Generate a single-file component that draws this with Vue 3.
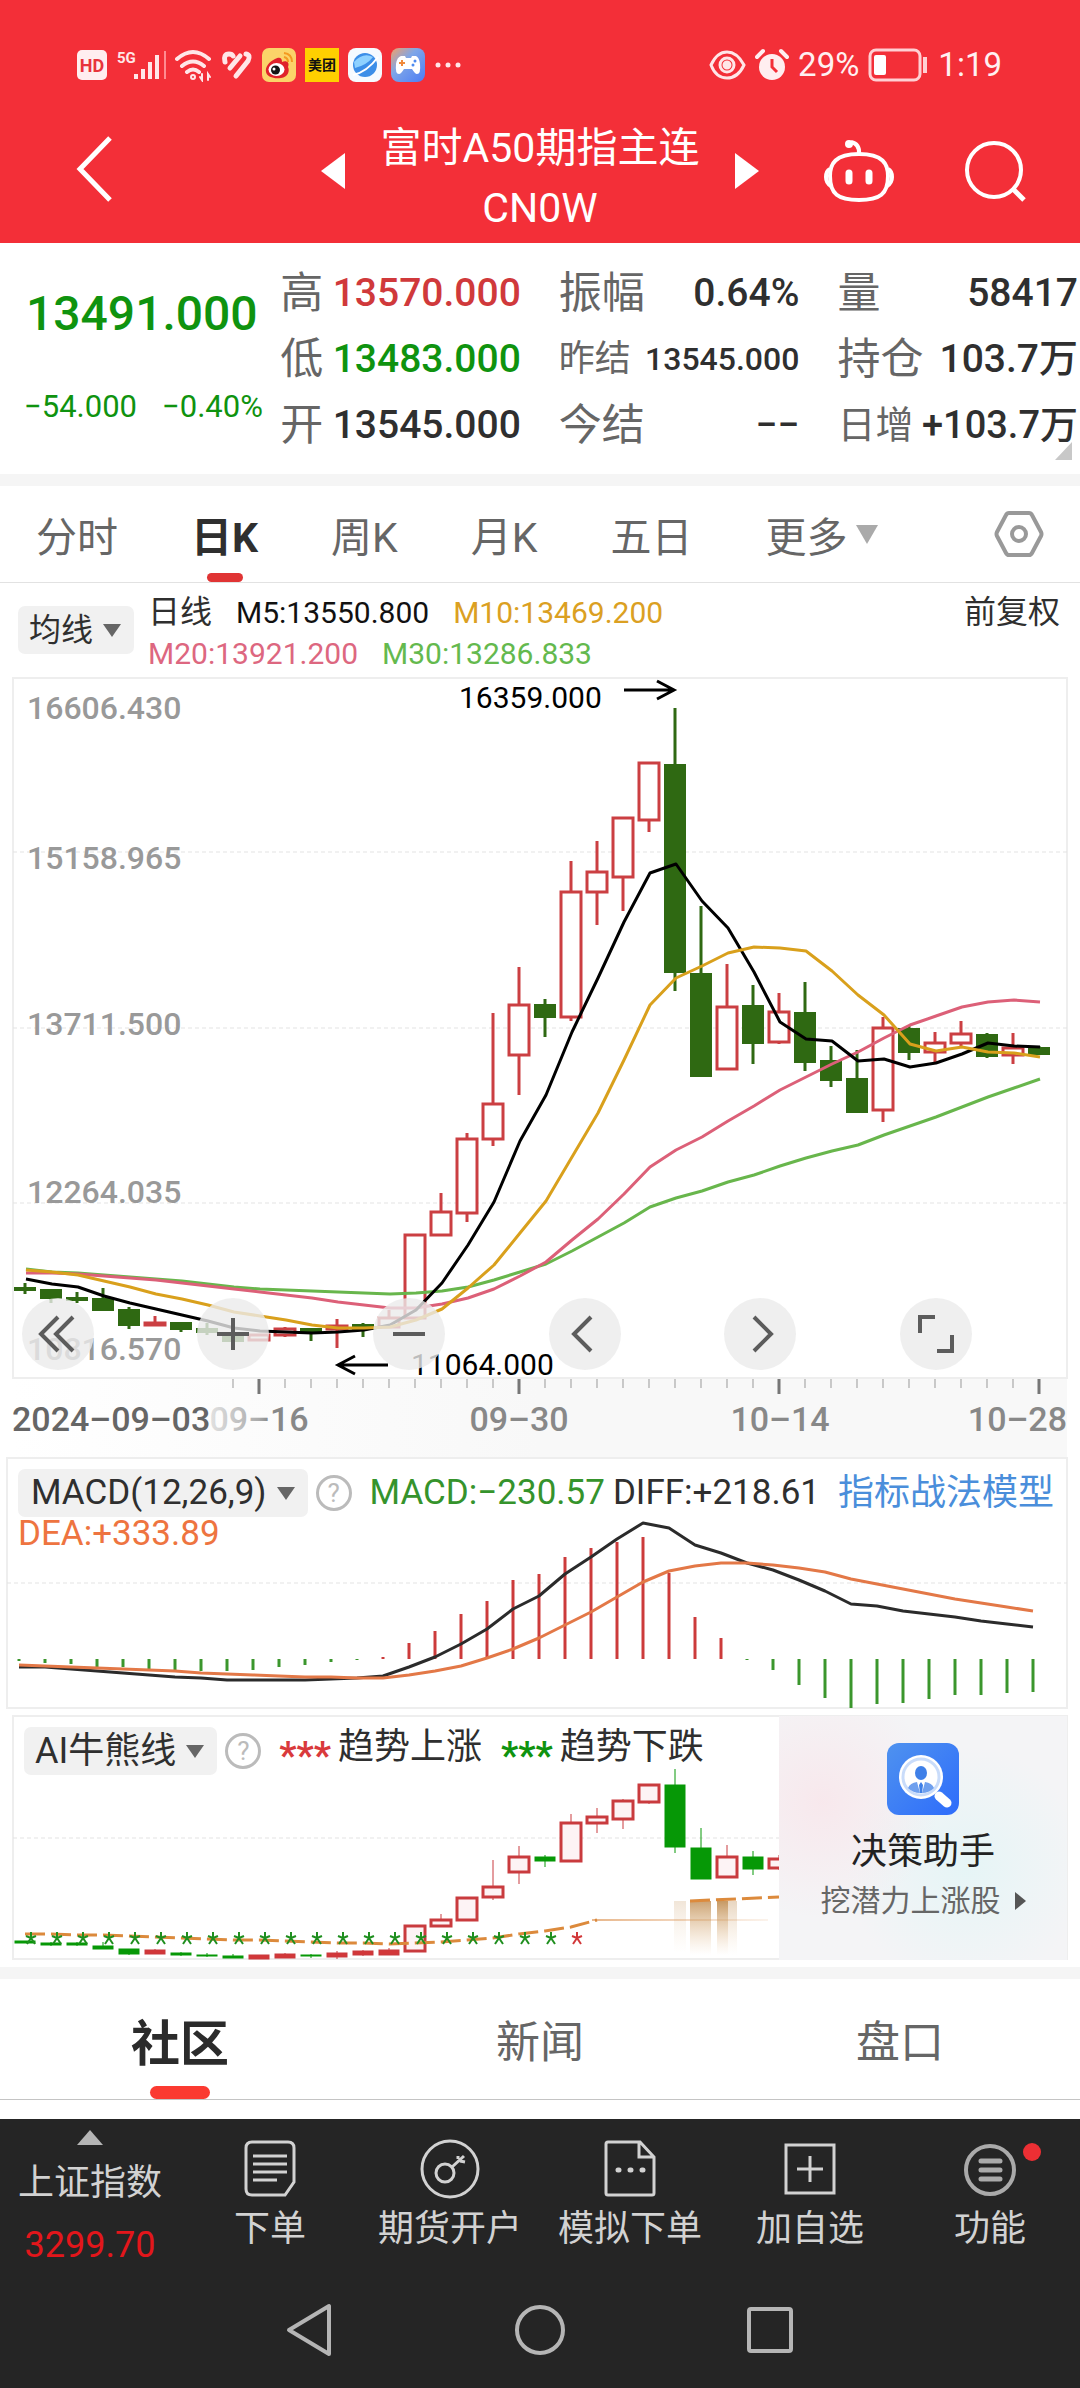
<script setup>
import { ref } from 'vue'

const STEP = 26

const stats = [
  [
    { label: '高', value: '13570.000', tone: 'up' },
    { label: '低', value: '13483.000', tone: 'down' },
    { label: '开', value: '13545.000' }
  ],
  [
    { label: '振幅', value: '0.64%' },
    { label: '昨结', value: '13545.000', size: 'small' },
    { label: '今结', value: '−−' }
  ],
  [
    { label: '量', value: '58417' },
    { label: '持仓', value: '103.7万' },
    { label: '日增', value: '+103.7万', size: 'medium' }
  ]
]

const periods = ['分时', '日K', '周K', '月K', '五日']
const period = ref('日K')

const pages = ['社区', '新闻', '盘口']
const page = ref('社区')

// kind, wick top, body top, body bottom, wick bottom
const candles = [
  ['g', 1283, 1288, 1290, 1294], ['g', 1289, 1290, 1298, 1303], ['g', 1292, 1298, 1300, 1303],
  ['g', 1288, 1299, 1310, 1310], ['g', 1307, 1310, 1325, 1329], ['r', 1316, 1323, 1325, 1325],
  ['g', 1323, 1323, 1329, 1332], ['g', 1323, 1329, 1332, 1335], ['g', 1334, 1334, 1341, 1341],
  ['r', 1334, 1335, 1340, 1341], ['r', 1327, 1329, 1335, 1337], ['g', 1328, 1329, 1332, 1341],
  ['r', 1319, 1326, 1329, 1348], ['g', 1323, 1325, 1329, 1337], ['r', 1310, 1318, 1327, 1327],
  ['r', 1235, 1235, 1318, 1318], ['r', 1193, 1212, 1235, 1235], ['r', 1133, 1139, 1213, 1222],
  ['r', 1013, 1104, 1139, 1146], ['r', 967, 1005, 1055, 1095], ['g', 999, 1005, 1017, 1037],
  ['r', 861, 892, 1017, 1021], ['r', 841, 872, 892, 925], ['r', 817, 818, 877, 911],
  ['r', 762, 763, 820, 832], ['g', 708, 765, 972, 991], ['g', 906, 974, 1076, 1077],
  ['r', 964, 1007, 1069, 1069], ['g', 985, 1006, 1043, 1064], ['r', 993, 1012, 1042, 1044],
  ['g', 982, 1013, 1062, 1071], ['g', 1046, 1061, 1080, 1087], ['g', 1050, 1079, 1112, 1112],
  ['r', 1017, 1028, 1110, 1122], ['g', 1026, 1029, 1052, 1060], ['r', 1032, 1043, 1052, 1062],
  ['r', 1021, 1034, 1043, 1047], ['g', 1033, 1035, 1056, 1058], ['r', 1033, 1048, 1055, 1064],
  ['g', 1046, 1048, 1054, 1055]
].map(([kind, high, top, bottom, low], i) => ({ kind, high, top, bottom, low, x: 25 + STEP * i }))

const points = (start, ys) => ys.map((y, i) => `${start + STEP * i},${y}`).join(' ')

const averages = [
  { name: 'm30', ys: [1269, 1272, 1273, 1275, 1277, 1279, 1281, 1284, 1287, 1289, 1290, 1291, 1292, 1293, 1294, 1293, 1291, 1287, 1280, 1272, 1264, 1251, 1237, 1223, 1207, 1198, 1191, 1182, 1175, 1166, 1158, 1151, 1145, 1135, 1126, 1117, 1107, 1097, 1088, 1079] },
  { name: 'm20', ys: [1273, 1273, 1274, 1276, 1278, 1280, 1283, 1286, 1289, 1292, 1295, 1298, 1302, 1305, 1308, 1308, 1304, 1298, 1289, 1276, 1262, 1240, 1219, 1194, 1167, 1150, 1137, 1121, 1106, 1090, 1077, 1064, 1052, 1038, 1025, 1016, 1007, 1002, 1000, 1002] },
  { name: 'm5', ys: [1279, 1284, 1287, 1296, 1303, 1309, 1315, 1321, 1328, 1331, 1332, 1333, 1332, 1330, 1325, 1310, 1283, 1245, 1202, 1141, 1095, 1032, 978, 922, 873, 864, 901, 928, 972, 1022, 1039, 1041, 1061, 1059, 1067, 1063, 1054, 1043, 1046, 1047] },
  { name: 'm10', ys: [1270, 1272, 1275, 1281, 1287, 1294, 1299, 1305, 1312, 1316, 1320, 1325, 1328, 1328, 1327, 1320, 1309, 1288, 1265, 1233, 1201, 1157, 1113, 1060, 1005, 978, 966, 953, 947, 948, 951, 971, 995, 1015, 1044, 1051, 1047, 1052, 1053, 1057] }
].map(({ name, ys }) => ({ name, points: points(26, ys) }))

const levels = [
  { text: '16606.430', y: 719 },
  { text: '15158.965', y: 869 },
  { text: '13711.500', y: 1035 },
  { text: '12264.035', y: 1203 },
  { text: '10816.570', y: 1360 }
]

const ticks = Array.from({ length: 32 }, (_, i) => ({ x: 233 + STEP * i, major: i % 10 === 1 }))

const macdBase = 1659
const macdBars = [
  1661, 1663, 1664, 1667, 1667, 1669, 1670, 1671, 1671, 1670, 1667, 1665, 1662, 1660, 1657, 1643, 1631, 1614, 1601, 1580,
  1574, 1557, 1548, 1542, 1537, 1573, 1617, 1638, 1660, 1670, 1685, 1698, 1708, 1704, 1703, 1699, 1695, 1695, 1693, 1692
].map((y, i) => ({ y, x: 19 + STEP * i }))
const diff = points(19, [
  1667, 1667, 1669, 1671, 1673, 1675, 1677, 1678, 1680, 1680, 1680, 1680, 1679, 1678, 1676, 1667, 1657, 1644, 1629, 1609,
  1596, 1574, 1557, 1539, 1523, 1528, 1545, 1553, 1563, 1570, 1580, 1591, 1604, 1606, 1611, 1614, 1617, 1621, 1624, 1627
])
const dea = points(19, [
  1665, 1666, 1667, 1668, 1669, 1670, 1671, 1673, 1674, 1675, 1676, 1677, 1677, 1678, 1678, 1675, 1671, 1666, 1658, 1649,
  1638, 1625, 1612, 1597, 1582, 1571, 1566, 1563, 1563, 1565, 1568, 1572, 1579, 1584, 1589, 1594, 1599, 1603, 1607, 1611
])

const trendCandles = [
  ['g', 1941, 1941, 1943, 1943], ['g', 1942, 1943, 1945, 1946], ['g', 1942, 1943, 1945, 1946],
  ['g', 1942, 1946, 1949, 1949], ['g', 1949, 1949, 1954, 1955], ['f', 1949, 1950, 1954, 1954],
  ['g', 1952, 1953, 1955, 1956], ['g', 1953, 1955, 1956, 1957], ['g', 1954, 1956, 1958, 1958],
  ['f', 1955, 1955, 1959, 1959], ['f', 1953, 1954, 1958, 1958], ['g', 1954, 1955, 1956, 1958],
  ['f', 1951, 1953, 1957, 1959], ['f', 1950, 1951, 1955, 1956], ['f', 1948, 1950, 1955, 1955],
  ['r', 1926, 1926, 1951, 1951], ['r', 1914, 1920, 1926, 1926], ['r', 1897, 1898, 1920, 1921],
  ['r', 1860, 1887, 1897, 1900], ['r', 1846, 1857, 1872, 1884], ['g', 1855, 1857, 1861, 1867],
  ['r', 1814, 1823, 1861, 1862], ['r', 1808, 1817, 1823, 1833], ['r', 1799, 1801, 1819, 1829],
  ['r', 1784, 1785, 1802, 1804], ['g', 1769, 1785, 1847, 1853], ['g', 1828, 1848, 1879, 1879],
  ['r', 1845, 1857, 1877, 1878], ['g', 1851, 1857, 1869, 1875], ['r', 1855, 1859, 1868, 1870]
].map(([kind, high, top, bottom, low], i) => ({ kind, high, top, bottom, low, x: 25 + STEP * i }))
const trendLine = points(25, [
  1934, 1934, 1935, 1935, 1936, 1937, 1938, 1939, 1940, 1940, 1941, 1942, 1943, 1943, 1944, 1943, 1942, 1940, 1938, 1934, 1931, 1927, 1920
])
const stars = Array.from({ length: 22 }, (_, i) => ({ x: 31 + STEP * i, up: i === 21 }))
</script>

<template>
  <div class="app">
    <header class="top">
      <div class="status">
        <div class="status-group">
          <svg width="30" height="34" viewBox="0 0 30 34">
            <rect y="2" width="30" height="30" rx="5" fill="#ffeef0" />
            <text x="15" y="24" text-anchor="middle" class="hd">HD</text>
          </svg>
          <svg width="50" height="34" viewBox="0 0 50 34">
            <text x="1" y="15" class="fiveg">5G</text>
            <path d="M20 31v-5M27 31V21M34 31V14M41 31V7" stroke="#ffe6e8" stroke-width="4" />
            <path d="M49 31V3" stroke="#ff8a90" stroke-width="2" />
          </svg>
          <svg width="37" height="34" viewBox="0 0 37 34" fill="none" stroke="#ffe6e8" stroke-width="4" stroke-linecap="round">
            <path d="M2 11q16-14 32 0M7 18q11-9 22 0M12 24q6-5 12 0" />
            <circle cx="18" cy="29" r="1" />
            <path d="M27 26v6l-2-3M33 32v-6l2 3" stroke-width="2" />
          </svg>
          <svg width="32" height="34" viewBox="0 0 32 34" fill="none" stroke="#ffe6e8" stroke-width="5" stroke-linecap="round">
            <path d="M4 14q-2-8 4-8 3 0 4 2M9 20L19 8M15 28L27 13q3-6-2-7" />
          </svg>
          <svg width="34" height="34" viewBox="0 0 34 34">
            <rect width="34" height="34" rx="7" fill="#fbd469" />
            <path d="M13 11c-6 3-10 8-9 13s8 7 15 6 9-7 7-11c2-5-2-7-6-5 0-5-3-5-7-3z" fill="#e0222b" />
            <ellipse cx="14.500" cy="21.500" rx="8" ry="6.500" fill="#fff" />
            <circle cx="13.500" cy="22" r="4.500" fill="#151515" />
            <circle cx="12" cy="21" r="1.500" fill="#fff" />
            <path d="M22 5q8 1 8 9M22 9q4 1 4 5" fill="none" stroke="#f49a20" stroke-width="2" />
          </svg>
          <span class="meituan">美团</span>
          <svg width="34" height="34" viewBox="0 0 34 34">
            <rect width="34" height="34" rx="8" fill="#f5faff" />
            <circle cx="17" cy="17" r="12" fill="#3c8ee8" />
            <path d="M6 14q9-10 19-5-6 8-18 11z" fill="#8ed1ff" />
            <path d="M5 27Q19 24 30 9" fill="none" stroke="#fff" stroke-width="2" />
          </svg>
          <svg width="34" height="34" viewBox="0 0 34 34">
            <defs>
              <linearGradient id="game" x1="0" y1="0" x2="1" y2="1">
                <stop offset="0" stop-color="#f3a06a" />
                <stop offset="0.400" stop-color="#7ea6e8" />
                <stop offset="1" stop-color="#4c7cf5" />
              </linearGradient>
            </defs>
            <rect width="34" height="34" rx="8" fill="url(#game)" />
            <path d="M10 8h4l1 2h5l1-2h4q3 1 4 8 1 10-3 10-2 0-5-5h-8q-3 5-5 5-4 0-3-10 1-7 5-8z" fill="#fff" />
            <path d="M11 12v6M8 15h6" stroke="#f08a3c" stroke-width="2" />
            <circle cx="24" cy="13" r="1.500" fill="#4c8af0" />
            <circle cx="22" cy="17" r="1.500" fill="#4c8af0" />
          </svg>
          <svg width="30" height="34" viewBox="0 0 30 34" fill="#ffe6e8">
            <circle cx="4" cy="17" r="2.500" /><circle cx="14" cy="17" r="2.500" /><circle cx="24" cy="17" r="2.500" />
          </svg>
        </div>
        <div class="status-group">
          <svg width="37" height="34" viewBox="0 0 37 34" fill="none" stroke="#ffe6e8" stroke-width="3">
            <path d="M2 17Q8 4 18 4t17 13Q29 30 18 30T2 17z" />
            <circle cx="18" cy="17" r="7" />
            <circle cx="18" cy="17" r="3" fill="#ffe6e8" />
          </svg>
          <svg width="34" height="34" viewBox="0 0 34 34">
            <circle cx="17" cy="19" r="13" fill="#ffeef0" />
            <path d="M17 11v8l5 5" fill="none" stroke="#f32f38" stroke-width="3" />
            <path d="M2 9l6-6M32 9l-6-6" stroke="#ffeef0" stroke-width="4" stroke-linecap="round" />
          </svg>
          <span>29%</span>
          <svg width="61" height="34" viewBox="0 0 61 34">
            <rect x="2" y="2" width="50" height="30" rx="6" fill="none" stroke="#ffd0d3" stroke-width="3" />
            <rect x="6" y="7" width="12" height="20" rx="2" fill="#fff" />
            <path d="M57 9v16" stroke="#ffd0d3" stroke-width="4" />
          </svg>
          <span>1:19</span>
        </div>
      </div>
      <div class="title-row">
        <div class="title-left">
          <button type="button" class="bare" aria-label="返回">
            <svg width="38" height="68" viewBox="0 0 38 68" fill="none" stroke="#fff" stroke-width="5"><path d="M34 3L4 34l30 31" /></svg>
          </button>
        </div>
        <div class="title-mid">
          <button type="button" class="bare" aria-label="上一个">
            <svg width="24" height="36" viewBox="0 0 24 36"><path d="M24 0v36L0 18z" fill="#fff" /></svg>
          </button>
          <h1>富时A50期指主连<br />CN0W</h1>
          <button type="button" class="bare" aria-label="下一个">
            <svg width="24" height="36" viewBox="0 0 24 36"><path d="M0 0v36l24-18z" fill="#fff" /></svg>
          </button>
        </div>
        <div class="title-right">
          <button type="button" class="bare" aria-label="助手">
            <svg width="72" height="66" viewBox="0 0 72 66" fill="none" stroke="#fff" stroke-width="4">
              <path d="M36 16c24 0 29 10 29 22 0 18-8 24-29 24S7 56 7 38c0-12 5-22 29-22z" />
              <path d="M7 31q-4 2-4 8t5 9M65 31q4 2 4 8t-5 9M36 16q1-10-8-12" />
              <circle cx="26" cy="6" r="3" fill="#fff" stroke-width="2" />
              <path d="M26 35v8M46 35v8" stroke-width="7" stroke-linecap="round" />
            </svg>
          </button>
          <button type="button" class="bare" aria-label="搜索">
            <svg width="64" height="64" viewBox="0 0 64 64" fill="none" stroke="#fff" stroke-width="4">
              <circle cx="31" cy="31" r="27" /><path d="M50 50l11 11" stroke-width="5" />
            </svg>
          </button>
        </div>
      </div>
    </header>

    <section class="quote">
      <div class="price">
        <strong>13491.000</strong>
        <div class="change"><span>−54.000</span><span>−0.40%</span></div>
      </div>
      <div class="stats">
        <dl v-for="(column, c) in stats" :key="c">
          <div v-for="item in column" :key="item.label" :class="['stat', item.tone, item.size]">
            <dt>{{ item.label }}</dt>
            <dd>{{ item.value }}</dd>
          </div>
        </dl>
      </div>
      <i class="corner"></i>
    </section>

    <nav class="periods">
      <button v-for="name in periods" :key="name" type="button" :class="{ active: name === period }" @click="period = name">{{ name }}</button>
      <button type="button" class="more">更多<i class="caret large"></i></button>
      <button type="button" class="gear" aria-label="设置">
        <svg width="50" height="48" viewBox="0 0 50 48" fill="none" stroke="#999" stroke-width="4">
          <path d="M15 3h20q2 0 3 2l9 17q1 2 0 4l-9 17q-1 2-3 2H15q-2 0-3-2L3 26q-1-2 0-4l9-17q1-2 3-2z" />
          <circle cx="25" cy="24" r="7" />
        </svg>
      </button>
    </nav>

    <div class="legend">
      <button type="button" class="pill">均线<i class="caret"></i></button>
      <div class="legend-values">
        <div><span>日线</span><span class="m5">M5:13550.800</span><span class="m10">M10:13469.200</span></div>
        <div><span class="m20">M20:13921.200</span><span class="m30">M30:13286.833</span></div>
      </div>
      <button type="button" class="adjust">前复权</button>
    </div>

    <section class="kline">
      <svg class="plot" viewBox="0 677 1080 780">
        <defs>
          <linearGradient id="axis" x1="0" x2="1"><stop offset="0" stop-color="#fff" /><stop offset="0.500" stop-color="#f8f8f8" /></linearGradient>
          <linearGradient id="fade" x1="0" x2="1"><stop offset="0" stop-color="#e2e2e2" /><stop offset="0.500" stop-color="#aaa" /><stop offset="0.600" stop-color="#888" /></linearGradient>
        </defs>
        <rect x="13" y="1379" width="1054" height="78" fill="url(#axis)" />
        <rect x="13" y="678" width="1054" height="700" class="frame" />
        <path d="M13 852H1067M13 1028H1067M13 1203H1067" class="grid" />
        <text v-for="level in levels" :key="level.text" x="27" :y="level.y" class="level">{{ level.text }}</text>
        <g v-for="c in candles" :key="c.x" :class="c.kind">
          <path :d="`M${c.x} ${c.high}V${c.top}M${c.x} ${c.bottom}V${c.low}`" />
          <rect :x="c.x - 10" :y="c.top" width="20" :height="c.bottom - c.top" />
        </g>
        <polyline v-for="line in averages" :key="line.name" :points="line.points" :class="['line', line.name]" />
        <text x="459" y="708" class="mark">16359.000</text>
        <path d="M624 690h50M657 681l17 9-17 9" class="arrow" />
        <text x="411" y="1375" class="mark">11064.000</text>
        <path d="M388 1365h-50M355 1356l-17 9 17 9" class="arrow" />
        <path v-for="t in ticks" :key="t.x" :d="`M${t.x} 1379v${t.major ? 15 : 9}`" :class="t.major ? 'tick major' : 'tick'" />
        <text x="12" y="1431" class="date first">2024–09–03</text>
        <text x="259" y="1431" text-anchor="middle" class="date" fill="url(#fade)">09–16</text>
        <text x="519" y="1431" text-anchor="middle" class="date" fill="#888">09–30</text>
        <text x="780" y="1431" text-anchor="middle" class="date" fill="#888">10–14</text>
        <text x="1067" y="1431" text-anchor="end" class="date" fill="#888">10–28</text>
      </svg>
      <div class="tools">
        <button type="button" aria-label="更早"><svg viewBox="0 0 72 72"><path d="M36 19L19 36l17 17M51 19L34 36l17 17" /></svg></button>
        <button type="button" aria-label="放大"><svg viewBox="0 0 72 72"><path d="M36 20v32M20 36h32" /></svg></button>
        <button type="button" aria-label="缩小"><svg viewBox="0 0 72 72"><path d="M20 36h32" /></svg></button>
        <button type="button" aria-label="左移"><svg viewBox="0 0 72 72"><path d="M42 19L25 36l17 17" /></svg></button>
        <button type="button" aria-label="右移"><svg viewBox="0 0 72 72"><path d="M30 19l17 17-17 17" /></svg></button>
        <button type="button" aria-label="全屏"><svg viewBox="0 0 72 72"><path d="M35 19H20v16M37 53h15V37" /></svg></button>
      </div>
    </section>

    <section class="stack">
      <svg class="plot" viewBox="0 1457 1080 253">
        <rect x="7" y="1458" width="1060" height="250" class="frame" />
        <path d="M7 1583H1067" class="grid" />
        <path v-for="b in macdBars" :key="b.x" :d="`M${b.x} ${macdBase}V${b.y}`" :class="b.y > macdBase ? 'bar-down' : 'bar-up'" />
        <polyline :points="diff" class="line diff" />
        <polyline :points="dea" class="line dea" />
      </svg>
      <div class="indicator">
        <div class="indicator-row">
          <button type="button" class="pill wide">MACD(12,26,9)<i class="caret"></i></button>
          <button type="button" class="help" aria-label="MACD 说明">?</button>
          <span class="macd-value">MACD:−230.57</span>
          <span>DIFF:+218.61</span>
          <a href="#model">指标战法模型</a>
        </div>
        <div class="dea-value">DEA:+333.89</div>
      </div>
    </section>

    <section class="stack">
      <svg class="plot" viewBox="0 1710 1080 257">
        <defs>
          <clipPath id="trend"><rect x="13" y="1716" width="766" height="244" /></clipPath>
          <linearGradient id="glow" x1="0" y1="0" x2="0" y2="1"><stop offset="0" stop-color="#b87f3c" stop-opacity="0.800" /><stop offset="1" stop-color="#e8c090" stop-opacity="0" /></linearGradient>
          <linearGradient id="glow-soft" x1="0" x2="1"><stop offset="0" stop-color="#d98840" stop-opacity="0.600" /><stop offset="1" stop-color="#d98840" stop-opacity="0.100" /></linearGradient>
        </defs>
        <rect x="13" y="1716" width="1054" height="243" class="frame" />
        <path d="M13 1838H779" class="grid" />
        <g clip-path="url(#trend)">
          <g v-for="c in trendCandles" :key="c.x" :class="['trend', c.kind]">
            <path :d="`M${c.x} ${c.high}V${c.top}M${c.x} ${c.bottom}V${c.low}`" />
            <rect :x="c.x - 10" :y="c.top" width="20" :height="c.bottom - c.top" />
          </g>
          <polyline :points="trendLine" class="trend-line" />
          <rect x="592" y="1919" width="176" height="2" fill="url(#glow-soft)" />
          <rect x="674" y="1901" width="12" height="52" fill="url(#glow)" opacity="0.250" />
          <rect x="690" y="1901" width="21" height="54" fill="url(#glow)" opacity="0.900" />
          <rect x="717" y="1901" width="11" height="54" fill="url(#glow)" />
          <rect x="728" y="1901" width="9" height="54" fill="url(#glow)" opacity="0.400" />
          <path d="M690 1901L779 1897" class="trend-line" />
        </g>
        <path
          v-for="s in stars"
          :key="s.x"
          :d="`M${s.x} 1938v-6M${s.x} 1938l-5-2M${s.x} 1938l5-2M${s.x} 1938l-4 6M${s.x} 1938l4 6`"
          :class="s.up ? 'star-up' : 'star-down'"
        />
      </svg>
      <div class="indicator trend-head">
        <div class="indicator-row">
          <button type="button" class="pill">AI牛熊线<i class="caret"></i></button>
          <button type="button" class="help" aria-label="AI牛熊线 说明">?</button>
          <span class="key"><b class="up">***</b>趋势上涨</span>
          <span class="key"><b class="down">***</b>趋势下跌</span>
        </div>
      </div>
      <a class="promo" href="#assistant">
        <svg width="72" height="72" viewBox="0 0 72 72">
          <defs>
            <linearGradient id="blue" x1="0" y1="0" x2="1" y2="1"><stop offset="0" stop-color="#4f92ef" /><stop offset="1" stop-color="#2d6cfb" /></linearGradient>
          </defs>
          <rect width="72" height="72" rx="12" fill="url(#blue)" />
          <path d="M52 53l8 7" stroke="#fff" stroke-width="9" stroke-linecap="round" />
          <circle cx="34" cy="34" r="22" fill="#fff" />
          <circle cx="34" cy="34" r="18" fill="#fff" stroke="#c9dcfa" stroke-width="3" />
          <ellipse cx="34" cy="30" rx="6" ry="7" fill="#3f80e8" />
          <path d="M21 45q2-5 9-6l3 11q-7 0-12-5zM47 45q-2-5-9-6l-3 11q7 0 12-5z" fill="#6fa0ee" />
          <path d="M34 39l2 3-1 8h-2l-1-8z" fill="#3f80e8" />
        </svg>
        <strong>决策助手</strong>
        <span>挖潜力上涨股<i></i></span>
      </a>
    </section>

    <nav class="pages">
      <button v-for="name in pages" :key="name" type="button" :class="{ active: name === page }" @click="page = name">{{ name }}</button>
    </nav>

    <footer class="bottom">
      <nav class="actions">
        <a href="#index" class="index"><i></i><span>上证指数</span><b>3299.70</b></a>
        <a href="#order">
          <svg viewBox="0 0 60 60"><path d="M12 3h36q6 0 6 6v34l-9 13H12q-6 0-6-6V9q0-6 6-6zM13 17h34M13 25h34M13 33h34M13 41h24" /></svg>
          <span>下单</span>
        </a>
        <a href="#open">
          <svg viewBox="0 0 60 60"><circle cx="30" cy="30" r="28" /><circle cx="25" cy="34" r="9" /><path d="M32 28l12-11M38 20v-3M40 22l5 1" /></svg>
          <span>期货开户</span>
        </a>
        <a href="#demo">
          <svg viewBox="0 0 60 60"><path d="M6 5q0-2 2-2h32l14 15v36q0 2-2 2H8q-2 0-2-2zM39 3v15h15" /><path d="M18 31h1M30 31h1M42 31h1" stroke-width="5" stroke-linecap="round" /></svg>
          <span>模拟下单</span>
        </a>
        <a href="#add">
          <svg viewBox="0 0 60 60"><path d="M6 6h48v48H6zM30 17v26M17 30h26" /></svg>
          <span>加自选</span>
        </a>
        <a href="#tools" class="dot">
          <svg viewBox="0 0 60 60" class="dim"><circle cx="30" cy="31" r="24" /><path d="M21 22h19M21 31h19M21 40h19" stroke-width="5" stroke-linecap="round" /></svg>
          <span>功能</span>
        </a>
      </nav>
      <div class="system">
        <button type="button" class="bare" aria-label="返回上级"><svg width="54" height="54" viewBox="0 0 54 54"><path d="M46 3v48L6 27z" /></svg></button>
        <button type="button" class="bare" aria-label="主屏幕"><svg width="54" height="54" viewBox="0 0 54 54"><circle cx="27" cy="27" r="23" /></svg></button>
        <button type="button" class="bare" aria-label="最近任务"><svg width="54" height="54" viewBox="0 0 54 54"><rect x="6" y="6" width="42" height="42" rx="2" /></svg></button>
      </div>
    </footer>
  </div>
</template>

<style>
body {
  margin: 0;
  background: #fff;
}
</style>

<style scoped>
.app {
  font-family: Roboto, "Noto Sans CJK SC", sans-serif;
  color: #2f2f2f;
  overflow: hidden;
}
button {
  margin: 0;
  padding: 0;
  border: 0;
  background: none;
  font: inherit;
  color: inherit;
}
a {
  color: inherit;
  text-decoration: none;
}
svg {
  display: block;
}
i {
  display: block;
}

.top {
  background: #f32f38;
  color: #fff;
}
.status {
  display: flex;
  justify-content: space-between;
  padding: 48px 78px 16px 77px;
}
.status-group {
  display: flex;
  align-items: center;
  gap: 9px;
  font-size: 33px;
  line-height: 34px;
  color: #fff0f1;
}
.hd {
  font-size: 18px;
  font-weight: 700;
  fill: #e8343c;
}
.fiveg {
  font-size: 15px;
  font-weight: 700;
  fill: #ffe6e8;
}
.meituan {
  width: 34px;
  background: #ffd000;
  color: #111;
  font-size: 14px;
  font-weight: 700;
  text-align: center;
}
.title-row {
  display: grid;
  grid-template-columns: 1fr 438px 1fr;
  align-items: center;
  height: 145px;
}
.title-left {
  padding-left: 76px;
}
.title-mid {
  display: flex;
  align-items: center;
  justify-content: space-between;
}
.title-right {
  display: flex;
  justify-content: flex-end;
  align-items: center;
  gap: 68px;
  padding-right: 53px;
}
h1 {
  margin: 0;
  padding-top: 14px;
  font-size: 41px;
  font-weight: 400;
  line-height: 60px;
  text-align: center;
}

.quote {
  position: relative;
  display: flex;
  padding: 17px 2px 16px 0;
  border-bottom: 12px solid #f5f5f5;
}
.price {
  flex: 0 0 26%;
  padding-top: 24px;
  color: #0f930f;
}
.price strong {
  display: block;
  padding-left: 26px;
  font-size: 48px;
  font-weight: 500;
  line-height: 60px;
}
.change {
  display: flex;
  gap: 25px;
  padding: 43px 0 0 24px;
  font-size: 31px;
  line-height: 40px;
}
.stats {
  flex: 1;
  display: grid;
  grid-template-columns: repeat(3, 1fr);
  gap: 38px;
}
dl,
dd {
  margin: 0;
}
.stat {
  display: flex;
  justify-content: space-between;
  font-size: 39px;
  line-height: 66px;
  white-space: nowrap;
}
.stat dt {
  font-size: 43px;
  color: #666;
}
.stat dd {
  font-weight: 500;
}
.stat.small dd {
  font-size: 32px;
}
.stat.small dt {
  font-size: 36px;
}
.stat.medium,
.stat.medium dt {
  font-size: 38px;
}
.up {
  color: #d93a3c;
}
.stat.up dd {
  color: #d0393b;
}
.stat.down {
  color: #0f930f;
}
.down {
  color: #0f930f;
}
.corner {
  position: absolute;
  right: 8px;
  bottom: 14px;
  border-left: 17px solid transparent;
  border-bottom: 18px solid #c8c8c8;
}

.periods {
  display: flex;
  gap: 73px;
  height: 96px;
  padding: 0 36px;
  border-bottom: 1px solid #e2e2e2;
  font-size: 41px;
  color: #666;
}
.periods button {
  position: relative;
  white-space: nowrap;
}
.periods .active {
  color: #2f2f2f;
  font-weight: 700;
}
.periods .active::after {
  content: "";
  position: absolute;
  left: 50%;
  bottom: 0;
  width: 36px;
  height: 9px;
  margin-left: -18px;
  border-radius: 5px;
  background: #e03434;
}
.periods .more {
  display: flex;
  align-items: center;
  gap: 8px;
}
.periods .gear {
  margin-left: auto;
}
.caret {
  border: 9px solid transparent;
  border-top: 13px solid #666;
  border-bottom: 0;
}
.caret.large {
  border-width: 19px 11px 0;
  border-top-color: #aaa;
}

.legend {
  display: flex;
  align-items: flex-start;
  gap: 14px;
  padding: 9px 20px 3px 18px;
  font-size: 30px;
  line-height: 41px;
}
.legend-values {
  flex: 1;
}
.legend-values div {
  display: flex;
  gap: 24px;
}
.legend-values span:first-child:not(.m20),
.adjust {
  font-size: 32px;
}
.pill {
  display: flex;
  align-items: center;
  gap: 10px;
  height: 48px;
  padding: 0 13px 0 11px;
  border-radius: 7px;
  background: #f1f1f1;
  color: #2f2f2f;
  font-size: 32px;
  line-height: 48px;
  white-space: nowrap;
}
.legend .pill {
  margin-top: 14px;
}
.legend .m5 {
  color: #111;
}
.legend .m10 {
  color: #dba022;
}
.legend .m20 {
  color: #dd6780;
}
.legend .m30 {
  color: #64b94e;
}

.plot {
  width: 100%;
  height: auto;
}
.frame {
  fill: none;
  stroke: #eee;
  stroke-width: 2;
}
.grid {
  fill: none;
  stroke: #e3e3e3;
  stroke-width: 1;
  stroke-dasharray: 4 3;
}
.kline {
  position: relative;
}
.level {
  font-size: 32px;
  font-weight: 500;
  fill: #999;
}
.mark {
  font-size: 30px;
  fill: #000;
}
.arrow {
  fill: none;
  stroke: #000;
  stroke-width: 3;
}
.g {
  fill: #2f6912;
  stroke: #2f6912;
  stroke-width: 2;
}
.r {
  fill: #fff;
  stroke: #cb3f42;
  stroke-width: 3;
}
.g path,
.r path {
  stroke-width: 3;
}
.line {
  fill: none;
  stroke-width: 3;
  stroke-linejoin: round;
}
.line.m5 {
  stroke: #000;
}
.line.m10 {
  stroke: #d9a01c;
}
.line.m20 {
  stroke: #dc6078;
}
.line.m30 {
  stroke: #68b64c;
}
.tick {
  stroke: #999;
  stroke-width: 1;
}
.tick.major {
  stroke: #777;
  stroke-width: 3;
}
.date {
  font-size: 34px;
  font-weight: 500;
}
.date.first {
  fill: #666;
}
.tools {
  position: absolute;
  left: 2%;
  right: 10%;
  top: 621px;
  display: flex;
  justify-content: space-between;
}
.tools button {
  width: 72px;
  height: 72px;
  border-radius: 50%;
  background: rgba(235, 235, 235, 0.8);
}
.tools path {
  fill: none;
  stroke: #5c5c5c;
  stroke-width: 4;
}

.stack {
  display: grid;
}
.stack > * {
  grid-area: 1 / 1;
}
.indicator {
  align-self: start;
  padding: 12px 26px 0 18px;
  font-size: 35px;
}
.indicator-row {
  display: flex;
  align-items: center;
  gap: 8px;
  line-height: 48px;
  white-space: nowrap;
}
.indicator .pill.wide {
  padding-left: 13px;
  font-size: 35px;
}
.help {
  width: 36px;
  height: 36px;
  margin-right: 10px;
  border: 3px solid #bbb;
  border-radius: 50%;
  color: #bbb;
  font-size: 26px;
  line-height: 30px;
}
.macd-value {
  color: #35932c;
}
.indicator a {
  margin-left: auto;
  color: #4a8edb;
  font-size: 36px;
}
.dea-value {
  line-height: 34px;
  color: #ee7440;
}
.bar-up {
  stroke: #cc3b3b;
  stroke-width: 3;
}
.bar-down {
  stroke: #3b962d;
  stroke-width: 3;
}
.line.diff {
  stroke: #2b2b2b;
}
.line.dea {
  stroke: #e37847;
}

.trend-head {
  padding: 17px 0 0 24px;
  font-size: 36px;
}
.trend-head .pill {
  font-size: 36px;
}
.trend-head .key {
  display: flex;
  gap: 7px;
  margin-right: 11px;
  line-height: 38px;
}
.key b {
  padding-top: 10px;
  font-size: 38px;
  line-height: 37px;
}
.trend.g {
  fill: #069806;
  stroke: #069806;
  stroke-width: 1;
}
.trend.r,
.trend.f {
  fill: #fdf3f5;
  stroke: #c93b3e;
}
.trend.f {
  fill: #d23739;
}
.trend path {
  stroke-width: 1;
}
.trend-line {
  fill: none;
  stroke: #dc8a3c;
  stroke-width: 3;
  stroke-dasharray: 20 6;
}
.star-up,
.star-down {
  stroke: #d23739;
  stroke-width: 2;
}
.star-down {
  stroke: #1f8f1f;
}
.promo {
  justify-self: end;
  display: flex;
  flex-direction: column;
  align-items: center;
  box-sizing: border-box;
  width: 288px;
  margin: 6px 13px 7px 0;
  padding-top: 27px;
  background:
    radial-gradient(circle at 15% 35%, rgba(250, 224, 230, 0.6), transparent 40%),
    radial-gradient(circle at 65% 62%, rgba(226, 245, 246, 0.8), transparent 50%),
    #f4f4f6;
}
.promo strong {
  margin-top: 13px;
  color: #222;
  font-size: 36px;
  font-weight: 400;
  line-height: 48px;
}
.promo span {
  display: flex;
  align-items: center;
  gap: 14px;
  margin-top: 5px;
  color: #666;
  font-size: 30px;
  line-height: 40px;
}
.promo i {
  border: 9px solid transparent;
  border-left: 11px solid #555;
  border-right: 0;
}

.pages {
  display: grid;
  grid-template-columns: repeat(3, 1fr);
  height: 120px;
  margin-bottom: 19px;
  border-top: 12px solid #f5f5f5;
  border-bottom: 1px solid #c4c4c4;
  font-size: 44px;
  color: #666;
}
.pages button {
  position: relative;
}
.pages .active {
  color: #2b2b2b;
  font-size: 49px;
  font-weight: 700;
}
.pages .active::after {
  content: "";
  position: absolute;
  left: 50%;
  bottom: 0;
  width: 60px;
  height: 13px;
  margin-left: -30px;
  border-radius: 7px;
  background: #fb3a31;
}

.bottom {
  background: #252525;
  color: #d2d2d2;
}
.actions {
  display: grid;
  grid-template-columns: repeat(6, 1fr);
  height: 156px;
  font-size: 36px;
  line-height: 48px;
}
.actions a {
  position: relative;
  display: flex;
  flex-direction: column;
  align-items: center;
  gap: 6px;
  padding-top: 20px;
  white-space: nowrap;
}
.actions svg {
  width: 60px;
  height: 60px;
  fill: none;
  stroke: #d2d2d2;
  stroke-width: 3;
}
.actions .dim {
  stroke: #aaa;
  stroke-width: 4;
}
.actions .index {
  gap: 14px;
  padding-top: 11px;
}
.index i {
  border: 13px solid transparent;
  border-top: 0;
  border-bottom: 15px solid #b5b5b5;
}
.index b {
  color: #e3161b;
  font-weight: 400;
}
.dot::after {
  content: "";
  position: absolute;
  top: 24px;
  left: 50%;
  width: 18px;
  height: 18px;
  margin-left: 33px;
  border-radius: 50%;
  background: #ec2f34;
}
.system {
  display: flex;
  justify-content: center;
  gap: 176px;
  padding: 28px 0 31px;
}
.system svg {
  fill: none;
  stroke: #b5b5b5;
  stroke-width: 4;
  stroke-linejoin: round;
}
</style>
